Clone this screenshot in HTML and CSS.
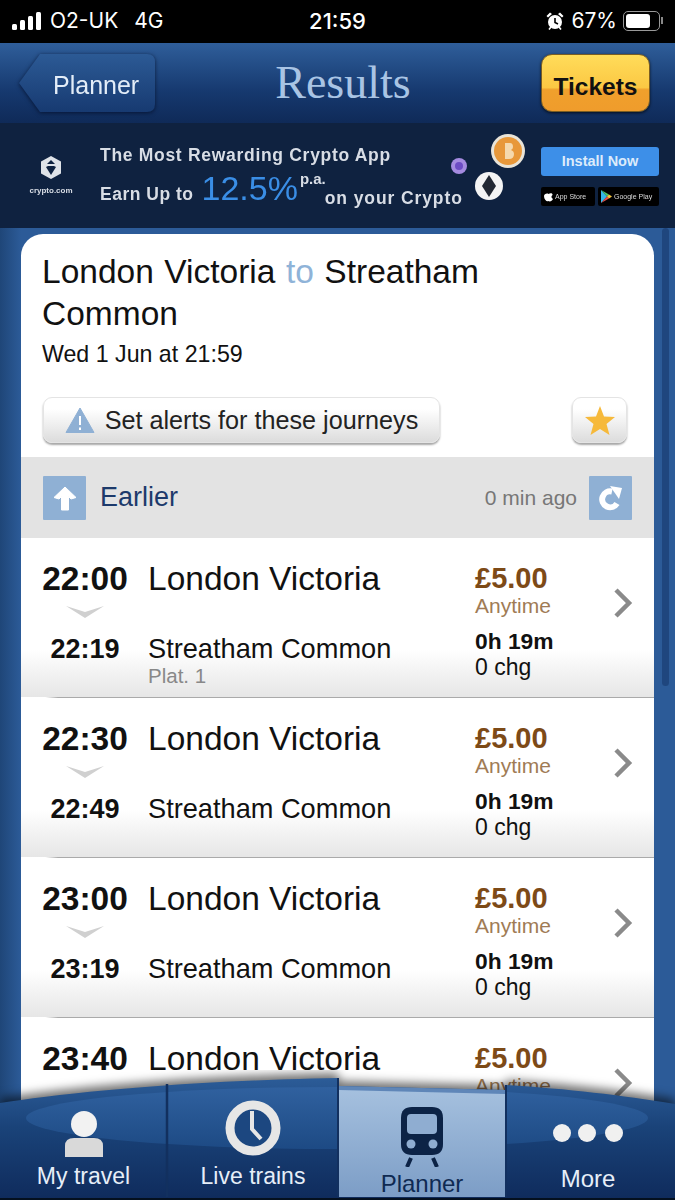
FILE: index.html
```html
<!DOCTYPE html>
<html lang="en">
<head>
  <meta charset="utf-8">
  <title>Results</title>
  <link rel="stylesheet" href="styles.css">
</head>
<body>
  <div class="screen">
    <!-- status bar -->
    <div class="status">
      <div class="status-left">
        <svg class="signal" width="30" height="20" viewBox="0 0 30 20">
          <rect x="0" y="13" width="5" height="6" rx="1.5"/>
          <rect x="8" y="9" width="5" height="10" rx="1.5"/>
          <rect x="16" y="5" width="5" height="14" rx="1.5"/>
          <rect x="24" y="1" width="5" height="18" rx="1.5"/>
        </svg>
        <span>O2-UK</span>
        <span class="net">4G</span>
      </div>
      <div class="status-time">21:59</div>
      <div class="status-right">
        <svg width="18" height="20" viewBox="0 0 18 20">
          <circle cx="9" cy="11" r="7" fill="#fff"/>
          <path d="M9 7v4.5l3 1.5" stroke="#000" stroke-width="1.6" fill="none"/>
          <path d="M0.5 5 4 1.5 6 3 2 6.5ZM17.5 5 14 1.5 12 3 16 6.5Z" fill="#fff"/>
          <path d="M3 18.5 5 16M15 18.5 13 16" stroke="#fff" stroke-width="1.6"/>
        </svg>
        <span>67%</span>
        <div class="battery"><div class="battery-fill"></div></div>
        <div class="battery-cap"></div>
      </div>
    </div>

    <!-- header -->
    <div class="topbar">
      <div class="back-wrap"><a class="back">Planner</a></div>
      <h1 class="page-title">Results</h1>
      <a class="tickets">Tickets</a>
    </div>

    <!-- ad -->
    <div class="ad">
      <div class="ad-logo">
        <svg width="22" height="25" viewBox="0 0 22 25">
          <path d="M11 1 21 6.5V18.500L11 24 1 18.500V6.500Z" fill="#dfe3e8"/>
          <path d="M11 5 7 9h8ZM6 12l5 8 5-8-2-1H8Z" fill="#0f2240"/>
        </svg>
        <span>crypto.com</span>
      </div>
      <div class="ad-copy">
        <div class="ad-line">The Most Rewarding Crypto App</div>
        <div class="ad-line-two">
          <span class="ad-earn">Earn Up to</span>
          <span class="ad-rate">12.5%</span>
          <span class="ad-pa">p.a.</span>
          <span class="ad-tail">on your Crypto</span>
        </div>
      </div>
      <svg class="ad-coins" width="80" height="90" viewBox="0 0 80 90">
        <circle cx="58" cy="26" r="17" fill="#e9e4d8"/>
        <circle cx="58" cy="26" r="14" fill="#e8983a"/>
        <path d="M55 18h5q3 0 3 4 0 2-2 3 3 1 3 4 0 5-5 5h-4Z" fill="#f5d9ae"/>
        <circle cx="39" cy="61" r="14" fill="#f4f4f4"/>
        <path d="M39 50 46 61 39 72 32 61Z" fill="#222833"/>
        <circle cx="9" cy="41" r="8" fill="#a58be0"/>
        <circle cx="9" cy="41" r="4" fill="#6d4cc4"/>
      </svg>
      <div class="ad-actions">
        <a class="ad-install">Install Now</a>
        <div class="ad-stores">
          <div class="store store-apple">
            <svg width="9" height="11" viewBox="0 0 9 11"><path d="M4.500 3C6 2 9 2 8.500 4 7 5 7 7 9 8 8 10 6 11 4.500 10 3 11 0 9 0 5 0 3 3 2 4.500 3Z" fill="#fff"/></svg>
            <span>App Store</span>
          </div>
          <div class="store store-google">
            <svg width="11" height="13" viewBox="0 0 11 13">
              <path d="M0 0 6 6.500 0 13Z" fill="#35b6e8"/>
              <path d="M0 0 8 4.500 6 6.500Z" fill="#4cc46a"/>
              <path d="M0 13 8 8.500 6 6.500Z" fill="#e8504a"/>
              <path d="M8 4.500 11 6.500 8 8.500 6 6.500Z" fill="#f6c43c"/>
            </svg>
            <span>Google Play</span>
          </div>
        </div>
      </div>
    </div>

    <!-- results -->
    <div class="content">
      <div class="scrollbar"></div>
      <div class="card">
        <div class="card-head">
          <h2 class="route">London Victoria <span class="route-to">to</span> Streatham Common</h2>
          <div class="route-date">Wed 1 Jun at 21:59</div>
          <div class="card-actions">
            <a class="btn btn-alert">
              <svg width="30" height="26" viewBox="0 0 30 26">
                <path d="M15 1 29 25.500H1Z" fill="#8fb0d4" stroke="#8fb0d4" stroke-linejoin="round"/>
                <path d="M15 9v9M15 20.500v2.500" stroke="#fff" stroke-width="2"/>
              </svg>
              <span>Set alerts for these journeys</span>
            </a>
            <a class="btn btn-star">
              <svg width="30" height="29" viewBox="0 0 30 29">
                <path d="M15 0 19 10.500 30 11 21.500 18 24.500 29 15 23 5.500 29 8.500 18 0 11 11 10.500Z" fill="#f6b93b"/>
              </svg>
            </a>
          </div>
        </div>

        <div class="earlier">
          <a class="square-btn">
            <svg width="24" height="26" viewBox="0 0 24 26">
              <path d="M12 2 23 12.500 18 14 15.500 11.500V25H8.500V11.500L6 14 1 12.500Z" fill="#fff" stroke="#fff" stroke-linejoin="round" stroke-width="1"/>
            </svg>
          </a>
          <span class="earlier-label">Earlier</span>
          <span class="earlier-ago">0 min ago</span>
          <a class="square-btn">
            <svg width="24" height="26" viewBox="0 0 24 26">
              <path d="M18 18.500A8 8 0 1 1 13 6.500" fill="none" stroke="#fff" stroke-width="6"/>
              <path d="M11 1 23 3 20 14Z" fill="#fff"/>
            </svg>
          </a>
        </div>

        <ul class="journeys">
          <li class="journey">
            <div class="times">
              <div class="dep">22:00</div>
              <svg class="down" width="38" height="12" viewBox="0 0 38 12"><path d="M0 0 19 6 38 0 19 12Z" fill="#d0d0d0"/></svg>
              <div class="arr">22:19</div>
            </div>
            <div class="stations">
              <div class="from">London Victoria</div>
              <div class="to">Streatham Common</div>
              <div class="plat">Plat. 1</div>
            </div>
            <div class="info">
              <div class="price">£5.00</div>
              <div class="ticket">Anytime</div>
              <div class="dur">0h 19m</div>
              <div class="chg">0 chg</div>
            </div>
            <svg class="chev" width="20" height="30" viewBox="0 0 20 30"><path d="M3 2 16 15 3 28" fill="none" stroke="#8a8a8a" stroke-width="4.500"/></svg>
          </li>
          <li class="journey">
            <div class="times">
              <div class="dep">22:30</div>
              <svg class="down" width="38" height="12" viewBox="0 0 38 12"><path d="M0 0 19 6 38 0 19 12Z" fill="#d0d0d0"/></svg>
              <div class="arr">22:49</div>
            </div>
            <div class="stations">
              <div class="from">London Victoria</div>
              <div class="to">Streatham Common</div>
            </div>
            <div class="info">
              <div class="price">£5.00</div>
              <div class="ticket">Anytime</div>
              <div class="dur">0h 19m</div>
              <div class="chg">0 chg</div>
            </div>
            <svg class="chev" width="20" height="30" viewBox="0 0 20 30"><path d="M3 2 16 15 3 28" fill="none" stroke="#8a8a8a" stroke-width="4.500"/></svg>
          </li>
          <li class="journey">
            <div class="times">
              <div class="dep">23:00</div>
              <svg class="down" width="38" height="12" viewBox="0 0 38 12"><path d="M0 0 19 6 38 0 19 12Z" fill="#d0d0d0"/></svg>
              <div class="arr">23:19</div>
            </div>
            <div class="stations">
              <div class="from">London Victoria</div>
              <div class="to">Streatham Common</div>
            </div>
            <div class="info">
              <div class="price">£5.00</div>
              <div class="ticket">Anytime</div>
              <div class="dur">0h 19m</div>
              <div class="chg">0 chg</div>
            </div>
            <svg class="chev" width="20" height="30" viewBox="0 0 20 30"><path d="M3 2 16 15 3 28" fill="none" stroke="#8a8a8a" stroke-width="4.500"/></svg>
          </li>
          <li class="journey">
            <div class="times">
              <div class="dep">23:40</div>
            </div>
            <div class="stations">
              <div class="from">London Victoria</div>
            </div>
            <div class="info">
              <div class="price">£5.00</div>
              <div class="ticket">Anytime</div>
            </div>
            <svg class="chev" width="20" height="30" viewBox="0 0 20 30"><path d="M3 2 16 15 3 28" fill="none" stroke="#8a8a8a" stroke-width="4.500"/></svg>
          </li>
        </ul>
      </div>
    </div>

    <!-- tab bar sits over the list -->
    <div class="tabbar">
      <svg class="tabbar-bg" width="675" height="130" viewBox="0 1070 675 130">
        <defs>
          <linearGradient id="barFill" x1="0" y1="0" x2="0" y2="1">
            <stop offset="0" stop-color="#2c5c98"/>
            <stop offset="0.4" stop-color="#1a4379"/>
            <stop offset="1" stop-color="#0f2b5c"/>
          </linearGradient>
          <linearGradient id="glossFill" x1="0" y1="0" x2="0" y2="1">
            <stop offset="0" stop-color="#30619f"/>
            <stop offset="1" stop-color="#1d4a84"/>
          </linearGradient>
          <linearGradient id="activeFill" x1="0" y1="0" x2="0" y2="1">
            <stop offset="0" stop-color="#a6c1df"/>
            <stop offset="1" stop-color="#7c9dc6"/>
          </linearGradient>
          <clipPath id="barClip">
            <path d="M0 1103C60 1094 170 1081 338 1078V1200H0Z"/>
            <path d="M506 1085C570 1089 620 1095 675 1104V1200H506Z"/>
          </clipPath>
        </defs>
        <g class="bar-shadow">
          <path d="M0 1103C60 1094 170 1081 338 1078L339 1086 505 1090 506 1085C570 1089 620 1095 675 1104V1200H0Z" fill="url(#barFill)"/>
        </g>
        <ellipse cx="337" cy="1118" rx="311" ry="31" fill="url(#glossFill)" clip-path="url(#barClip)"/>
        <path d="M339 1087 505 1091V1197H339Z" fill="url(#activeFill)"/>
        <path d="M339 1086 505 1090V1094L339 1090Z" fill="#5f86b8"/>
        <path d="M167 1084V1197" stroke="#12305f" stroke-width="2.500"/>
        <path d="M338 1078V1197M506 1085V1197" stroke="#12305f" stroke-width="2"/>
        <rect x="0" y="1198" width="675" height="2" fill="#04101f"/>
      </svg>
      <a class="tab tab-travel">
        <svg width="42" height="46" viewBox="0 0 42 46">
          <ellipse cx="21" cy="13" rx="13" ry="13" fill="#f2f2f2"/>
          <path d="M2 46V35Q2 27 11 27H31Q40 27 40 35V46Z" fill="#d9d9d9"/>
        </svg>
        <span>My travel</span>
      </a>
      <a class="tab tab-live">
        <svg width="56" height="56" viewBox="0 0 56 56">
          <circle cx="28" cy="28" r="23" fill="#1c4780" stroke="#e6e6e6" stroke-width="9"/>
          <path d="M27 11V29L36 39" fill="none" stroke="#e6e6e6" stroke-width="4"/>
        </svg>
        <span>Live trains</span>
      </a>
      <a class="tab tab-active">
        <svg width="44" height="60" viewBox="0 0 44 60">
          <path d="M12 0H32Q43 0 43 11V37Q43 48 32 48H12Q1 48 1 37V11Q1 0 12 0Z" fill="#0c2346"/>
          <rect x="7" y="7" width="30" height="20" rx="4" fill="#8fadd1"/>
          <circle cx="11" cy="37" r="4.500" fill="#8fadd1"/>
          <circle cx="33" cy="37" r="4.500" fill="#8fadd1"/>
          <path d="M11 51 7 60M33 51 37 60" stroke="#0c2346" stroke-width="4"/>
        </svg>
        <span>Planner</span>
      </a>
      <a class="tab tab-more">
        <svg width="72" height="20" viewBox="0 0 72 20">
          <circle cx="10" cy="10" r="9" fill="#f0f0f0"/>
          <circle cx="35" cy="10" r="9" fill="#f0f0f0"/>
          <circle cx="62" cy="10" r="9" fill="#f0f0f0"/>
        </svg>
        <span>More</span>
      </a>
    </div>
  </div>
</body>
</html>
```

FILE: styles.css
```css
* {
  margin: 0;
  padding: 0;
  box-sizing: border-box;
}
ul {
  list-style: none;
}
body {
  font-family: "Liberation Sans", Arial, sans-serif;
  background: #000;
}
.screen {
  position: relative;
  width: 675px;
  height: 1200px;
  overflow: hidden;
  display: flex;
  flex-direction: column;
}

/* status bar */
.status {
  display: flex;
  align-items: center;
  justify-content: space-between;
  height: 43px;
  padding: 0 12px 2px;
  background: #000;
  color: #fff;
  font-family: Inter, "Liberation Sans", sans-serif;
  font-size: 21px;
}
.status-left,
.status-right {
  display: flex;
  align-items: center;
  width: 220px;
}
.status-left .signal {
  fill: #fff;
  margin-right: 8px;
}
.status-left .net {
  margin-left: 16px;
}
.status-time {
  font-size: 22px;
  font-weight: 500;
}
.status-right {
  justify-content: flex-end;
}
.status-right span {
  margin-left: 7px;
}
.battery {
  width: 37px;
  height: 20px;
  margin-left: 6px;
  padding: 2px;
  border: 1px solid #999;
  border-radius: 5px;
}
.battery-fill {
  width: 24px;
  height: 100%;
  background: #fff;
  border-radius: 3px;
}
.battery-cap {
  width: 2px;
  height: 7px;
  margin-left: 1px;
  background: #888;
}

/* header */
.topbar {
  display: flex;
  align-items: center;
  justify-content: space-between;
  height: 80px;
  padding: 0 25px 0 19px;
  background: linear-gradient(#2f5e9a, #16396f 60%, #0f2a58);
}
.back-wrap {
  filter: drop-shadow(0 1px 2px rgba(3, 14, 40, 0.8));
}
.back {
  display: block;
  width: 136px;
  height: 58px;
  padding-left: 34px;
  background: linear-gradient(#2c5a95, #173a71);
  clip-path: path("M21 0H128Q136 0 136 8V50Q136 58 128 58H21L0 29Z");
  color: #e3edf8;
  font-size: 25px;
  line-height: 62px;
}
.page-title {
  margin-left: -10px;
  font-family: "Liberation Serif", "Times New Roman", serif;
  font-size: 46px;
  font-weight: normal;
  line-height: 46px;
  color: #a9c4e4;
}
.tickets {
  display: block;
  width: 109px;
  height: 58px;
  background: linear-gradient(#ffdc5a, #fbc843 58%, #f0a02c 62%, #ef9c2c);
  border: 1px solid #7a5d22;
  border-radius: 11px;
  box-shadow: 0 1px 3px rgba(0, 0, 0, 0.7);
  color: #111;
  font-size: 24.500px;
  font-weight: bold;
  line-height: 64px;
  text-align: center;
}

/* ad */
.ad {
  display: flex;
  align-items: flex-start;
  height: 105px;
  background: #0f2240;
  color: #d8dde5;
}
.ad-logo,
.ad-copy,
.ad-actions {
  filter: blur(0.6px);
}
.ad-logo {
  display: flex;
  flex-direction: column;
  align-items: center;
  width: 100px;
  padding: 32px 0 0 2px;
  font-size: 8px;
  font-weight: bold;
}
.ad-logo span {
  margin-top: 6px;
}
.ad-copy {
  width: 350px;
  font-size: 17.500px;
  font-weight: bold;
  letter-spacing: 0.7px;
  white-space: nowrap;
}
.ad-line {
  padding-top: 22px;
}
.ad-line-two {
  display: flex;
  align-items: flex-start;
}
.ad-earn {
  margin-top: 18px;
  letter-spacing: 0.5px;
}
.ad-rate {
  margin: 3px 0 0 8px;
  font-size: 34px;
  font-weight: normal;
  letter-spacing: 0;
  color: #3a8ee6;
}
.ad-pa {
  margin: 4px 0 0 2px;
  font-size: 15px;
  letter-spacing: 0;
}
.ad-tail {
  margin: 22px 0 0 -1px;
  letter-spacing: 0.9px;
}
.ad-coins {
  flex: none;
  margin-top: 2px;
  filter: blur(0.7px);
}
.ad-actions {
  width: 118px;
  margin: 24px 0 0 11px;
}
.ad-install {
  display: block;
  height: 29px;
  background: #3d8fe8;
  border-radius: 3px;
  color: #dcebfb;
  font-size: 14.500px;
  font-weight: bold;
  line-height: 29px;
  text-align: center;
}
.ad-stores {
  display: flex;
  justify-content: space-between;
  margin-top: 11px;
}
.store {
  display: flex;
  align-items: center;
  gap: 2px;
  height: 19px;
  padding: 0 3px;
  background: #000;
  border-radius: 2px;
  font-size: 7px;
  font-weight: normal;
  color: #ddd;
  white-space: nowrap;
}
.store-apple {
  width: 54px;
}
.store-google {
  width: 61px;
}

/* results */
.content {
  position: relative;
  flex: 1;
  min-height: 0;
  padding: 6px 21px 0;
  background: linear-gradient(90deg, #1f4678, #2c5b98 21px);
}
.scrollbar {
  position: absolute;
  top: 0;
  left: 662px;
  width: 7px;
  height: 458px;
  background: rgba(24, 56, 108, 0.6);
  border-radius: 4px;
}
.card {
  background: #fff;
  border-radius: 22px 22px 0 0;
}
.card-head {
  padding: 17px 21px 14px;
}
.route {
  padding-right: 120px;
  font-size: 33.500px;
  font-weight: normal;
  line-height: 42px;
  word-spacing: 1.200px;
  color: #111;
}
.route-to {
  color: #8fb3d8;
}
.route-date {
  margin-top: 4px;
  font-size: 23.200px;
  line-height: 30px;
  color: #111;
}
.card-actions {
  display: flex;
  justify-content: space-between;
  align-items: center;
  margin-top: 28px;
  padding-right: 6px;
  padding-left: 1px;
}
.btn {
  display: flex;
  align-items: center;
  justify-content: center;
  height: 46px;
  background: linear-gradient(#fff 25%, #dcdcdc);
  border: 1px solid #e4e4e4;
  border-radius: 9px;
  box-shadow: 0 2px 2px rgba(0, 0, 0, 0.35);
}
.btn-alert {
  width: 397px;
  gap: 10px;
  font-size: 25.200px;
  color: #222;
}
.btn-star {
  width: 55px;
}
.earlier {
  display: flex;
  align-items: center;
  height: 81px;
  padding: 0 22px;
  background: #e3e3e3;
}
.square-btn {
  display: flex;
  align-items: center;
  justify-content: center;
  width: 43px;
  height: 44px;
  background: #8fb0d4;
  border-radius: 1px;
}
.earlier-label {
  flex: 1;
  margin-left: 14px;
  font-size: 27px;
  color: #1d3a6b;
}
.earlier-ago {
  margin-right: 12px;
  font-size: 21px;
  color: #777;
}
.journey {
  display: flex;
  align-items: flex-start;
  height: 160px;
  padding: 21px 0 0 21px;
  background: linear-gradient(#fff 70%, #e6e6e6);
  border-bottom: 1px solid;
  border-image: linear-gradient(90deg, transparent 4%, #aaa 6%) 1;
}
.times {
  display: flex;
  flex-direction: column;
  align-items: center;
  width: 86px;
  margin-right: 20px;
}
.dep {
  font-size: 33.500px;
  font-weight: bold;
  line-height: 40px;
  color: #111;
}
.down {
  margin-top: 7px;
  filter: blur(0.6px);
}
.arr {
  margin-top: 15px;
  font-size: 27px;
  font-weight: bold;
  line-height: 32px;
  color: #111;
}
.stations {
  width: 327px;
  color: #111;
}
.from {
  font-size: 33.500px;
  line-height: 40px;
}
.to {
  margin-top: 34px;
  font-size: 27.200px;
  line-height: 32px;
}
.plat {
  font-size: 20.500px;
  line-height: 22px;
  color: #888;
}
.info {
  width: 138px;
  padding-top: 2px;
}
.price {
  font-size: 29px;
  font-weight: bold;
  line-height: 34px;
  color: #7d4a17;
}
.ticket {
  font-size: 21px;
  line-height: 22px;
  color: #a07b55;
}
.dur {
  margin-top: 11px;
  font-size: 22.800px;
  font-weight: bold;
  line-height: 26px;
  color: #111;
}
.chg {
  font-size: 23px;
  line-height: 26px;
  color: #111;
}
.chev {
  margin-top: 29px;
}

/* tab bar */
.tabbar {
  position: absolute;
  left: 0;
  bottom: 0;
  display: grid;
  grid-template-columns: 167px 172px 166px 170px;
  width: 675px;
  height: 130px;
}
.tabbar-bg {
  position: absolute;
  left: 0;
  top: 0;
}
.bar-shadow {
  filter: drop-shadow(0 -5px 5px rgba(0, 0, 0, 0.55));
}
.tab {
  position: relative;
  display: flex;
  flex-direction: column;
  align-items: center;
  justify-content: flex-end;
  color: #e6eef8;
  font-size: 23px;
  line-height: 28px;
}
.tab-travel {
  padding-bottom: 10px;
}
.tab-travel svg {
  margin-bottom: 5px;
}
.tab-live {
  padding-bottom: 10px;
}
.tab-live svg {
  margin-bottom: 6px;
}
.tab-active {
  padding-bottom: 2px;
  color: #0f2a52;
  font-size: 24px;
}
.tab-active svg {
  margin-bottom: 3px;
}
.tab-more {
  padding: 0 4px 7px 0;
  font-size: 24px;
}
.tab-more svg {
  margin: 0 0 22px 0;
}
```
